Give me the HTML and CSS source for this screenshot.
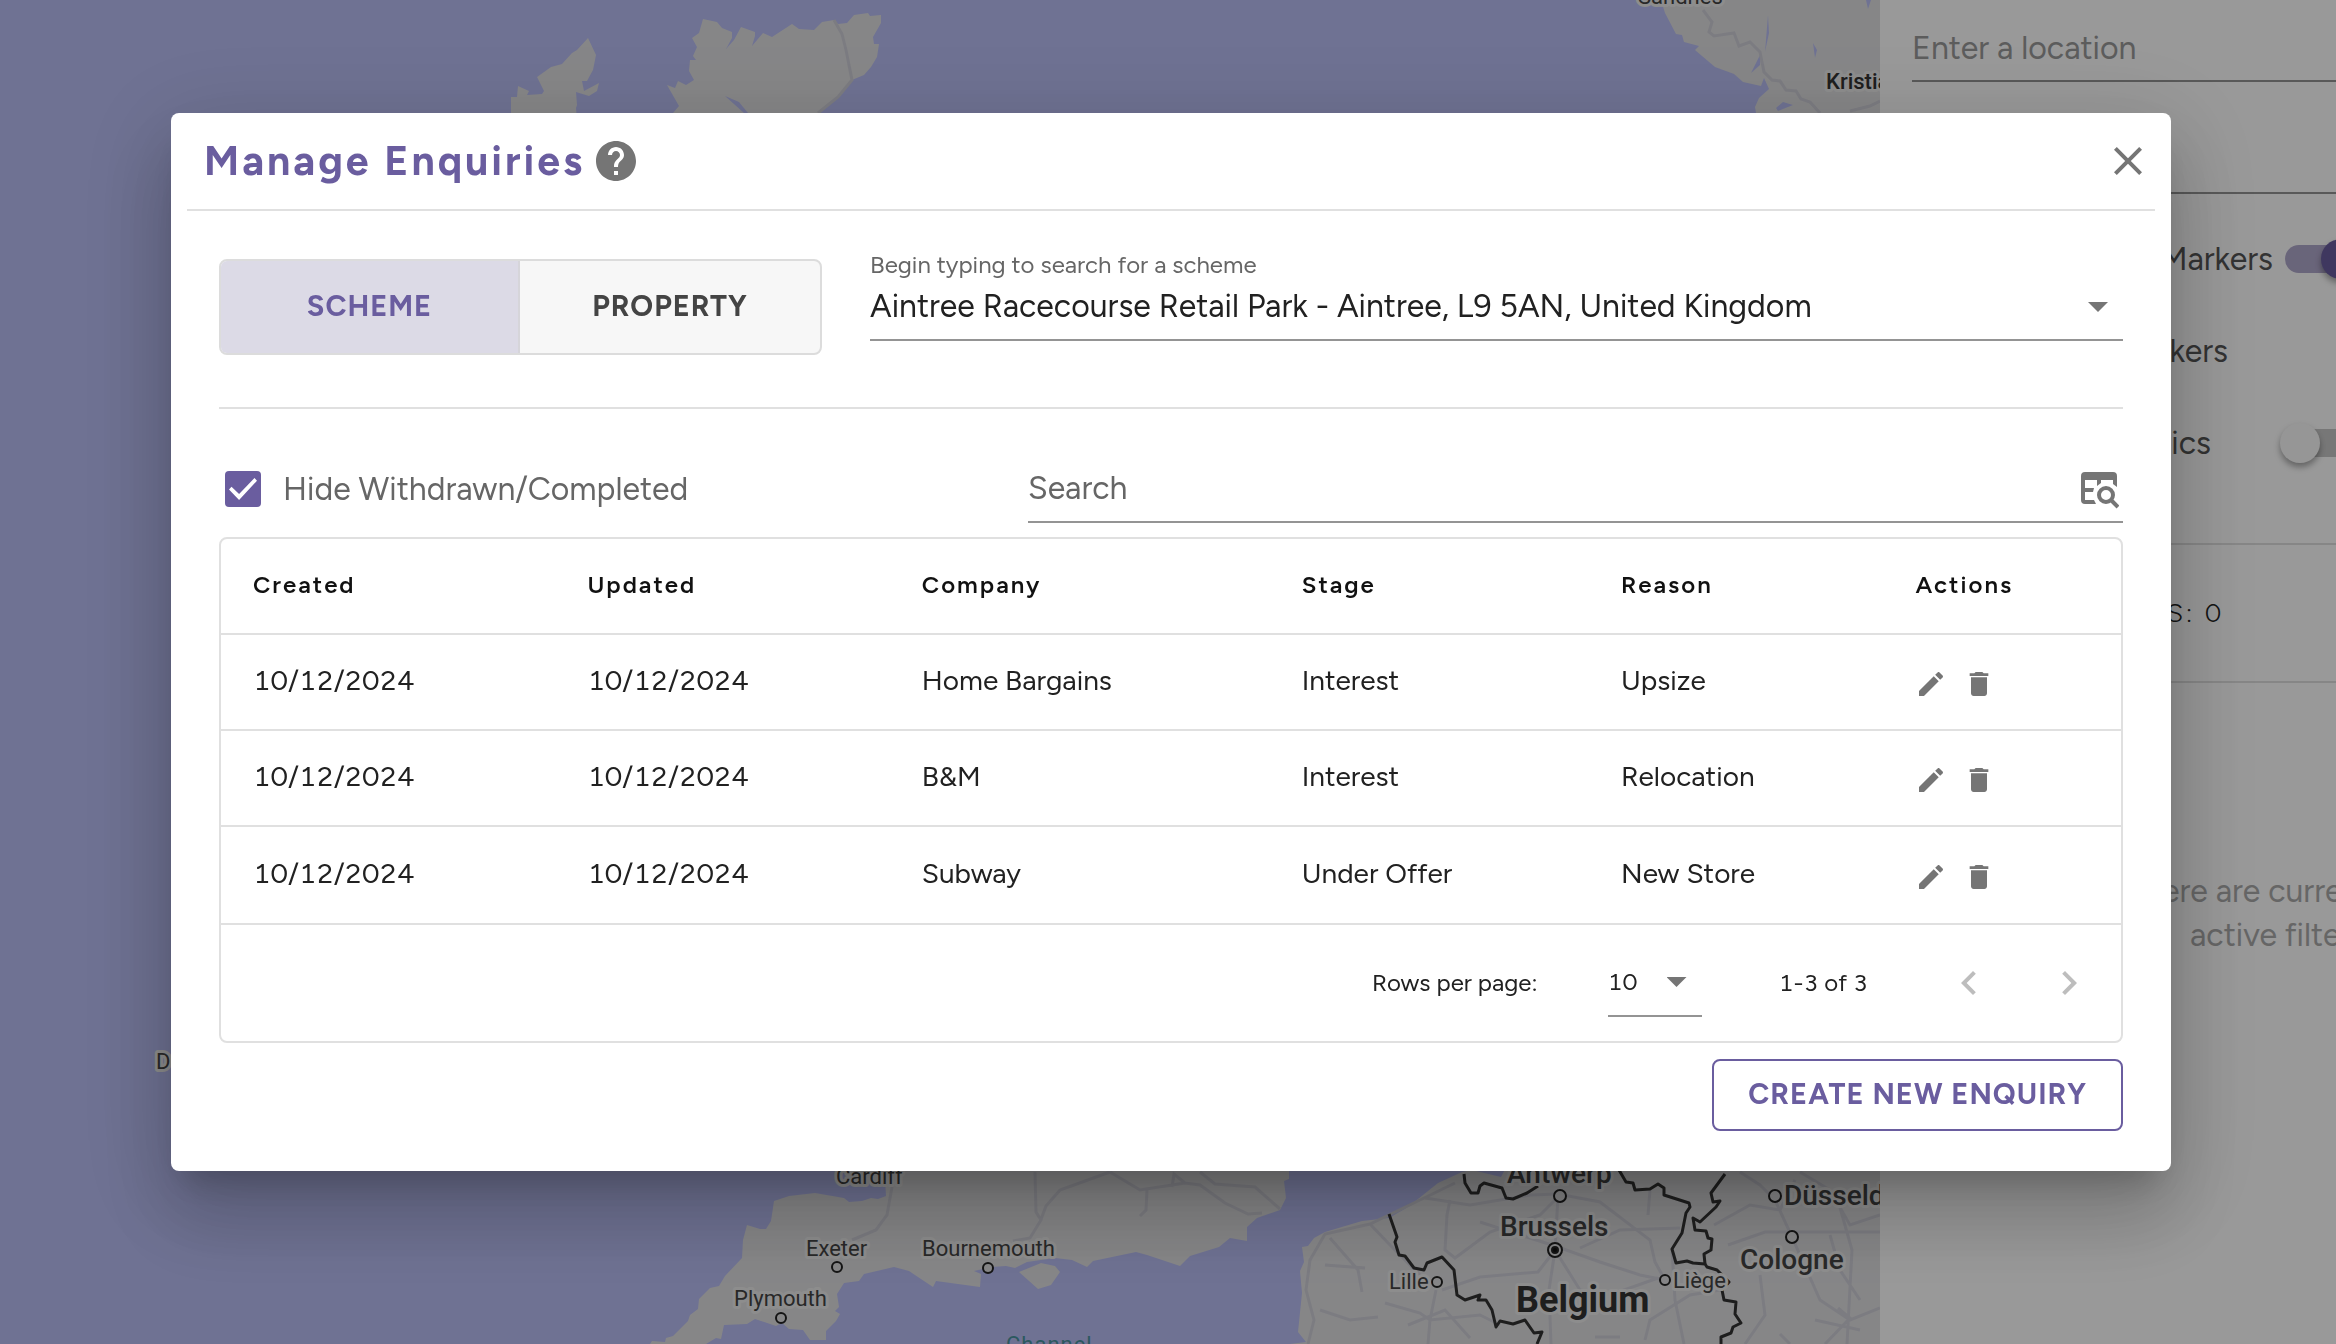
FILE: index.html
```html
<!DOCTYPE html>
<html lang="en">
<head>
<meta charset="utf-8">
<meta name="viewport" content="width=device-width, initial-scale=1">
<title>Manage Enquiries</title>
<link rel="stylesheet" href="styles.css">
</head>
<body>
<div class="app">
  <div class="map">
    <svg class="map-canvas" viewBox="0 0 1880 1344" preserveAspectRatio="xMinYMin slice" role="img" aria-label="Map">
      <g class="land">
        <path d="M588 38L596 55L593 70L587 81L582 81L584 91L599 83L597 91L589 96L576 92L577 105L576 108L578 130H511V97L517 97L518 86L529 91L527 95L542 94L544 91L537 77L551 67L562 64L572 53L577 50Z"/>
        <path d="M703 19L717 22L722 28L732 32L732 38L726 49L734 40L741 27L755 32L755 36L752 46L763 33L772 37L792 24L799 29L814 30L822 22L834 20L838 24L847 23L854 15L868 13L870 16L881 15L881 23L873 37L874 44L879 44L877 57L871 67L864 75L852 80L838 97L818 113L800 140H670L673 113L679 106L667 85L675 88L678 81L686 85L694 80L689 71L690 60L696 60L693 56L697 47L692 38L699 33Z"/>
        <path d="M1661 0L1665 13L1676 34L1682 35L1684 42L1699 46L1695 50L1715 67L1734 74L1743 82L1761 86L1764 78L1769 89L1759 98L1755 107L1759 130H1880V0Z"/>
        <path d="M884 1160L886 1196L878 1199L871 1198L862 1201L849 1202L844 1198L815 1193L789 1196L774 1201L771 1221L766 1229L760 1229L747 1225L743 1240L742 1258L725 1276L719 1286L710 1288L699 1299L698 1309L690 1315L688 1321L673 1336L666 1338L665 1342L652 1341L650 1344H706L716 1338L721 1339L724 1325L747 1324L755 1319L776 1326L782 1323L789 1329L803 1330L810 1340L826 1340L826 1331L836 1321L840 1314L835 1311L839 1307L837 1294L844 1283L859 1281L864 1274L894 1267L909 1271L933 1287L936 1281L980 1287L981 1274L974 1271L992 1267L1006 1266L1015 1268L1027 1262L1055 1258L1072 1260L1087 1267L1093 1261L1136 1252L1147 1255L1180 1266L1190 1256L1219 1247L1230 1238L1247 1241L1247 1227L1257 1218L1280 1210L1286 1198L1284 1181L1289 1179L1289 1160Z"/>
        <path d="M1041 1263L1055 1266L1060 1272L1051 1285L1038 1289L1019 1272Z"/>
        <path d="M1510 1160L1501 1177L1472 1170L1462 1172L1438 1183L1408 1207L1389 1218L1362 1221L1325 1232L1314 1238L1308 1246L1302 1247L1304 1262L1300 1271L1302 1293L1298 1332L1306 1342L1290 1344H1880V1160Z"/>
      </g>
      <g class="water">
        <path d="M725 96L739 102L748 113H744Z"/>
        <path d="M1768 15L1769 33L1765 52Z"/>
        <path d="M1751 73L1761 53L1760 65Z"/>
        <path d="M1813 43L1817 50L1815 58Z"/>
        <path d="M1866 0H1871L1868 9Z"/>
        <path d="M1776 108L1783 102L1793 105L1778 111Z"/>
      </g>
      <g class="roads">
        <path d="M834 20L842 34L846 50L852 80L838 97L818 113"/>
        <path d="M1703 10L1712 22L1709 32L1714 36L1734 33L1739 46L1750 42L1760 52L1764 72L1772 80L1780 81L1786 90L1796 91L1801 99L1810 102L1820 113M1850 111L1870 106L1880 101"/>
        <path d="M892 1187L887 1215L876 1230L852 1240M1035 1172L1036 1212L1041 1220L1030 1238L1013 1241M1110 1172L1060 1190L1046 1206L1040 1222M1110 1172L1140 1190L1185 1183L1200 1185L1225 1203L1248 1214L1262 1213M1147 1190L1146 1210L1140 1216M1172 1187L1174 1174L1185 1183M1200 1172L1215 1184L1255 1187L1280 1209"/>
        <path d="M1308 1344L1314 1320L1306 1290L1310 1260L1325 1234L1370 1224L1420 1200L1455 1183M1370 1224L1390 1245L1420 1275M1425 1198L1470 1205L1530 1195L1558 1194L1600 1202L1650 1240L1655 1262L1665 1280M1450 1200L1447 1215L1445 1250L1455 1258L1490 1232L1540 1215L1557 1198M1558 1196L1555 1250L1549 1290L1551 1344M1480 1222L1555 1246L1600 1262L1640 1275L1660 1279M1442 1290L1480 1277L1538 1272L1555 1250M1555 1250L1580 1290L1610 1295L1658 1278M1580 1248L1620 1230L1680 1228M1672 1249L1675 1300L1684 1344M1650 1190L1648 1215"/>
        <path d="M1330 1238L1358 1270L1362 1292M1325 1265L1365 1268M1320 1310L1350 1320L1378 1317M1385 1303L1420 1313L1430 1320L1480 1315L1500 1325M1436 1290L1430 1320L1428 1344M1408 1325L1445 1310L1470 1338M1595 1337H1620M1645 1340L1650 1320L1690 1295L1720 1290"/>
        <path d="M1740 1172L1760 1185L1775 1200L1792 1237L1820 1300L1850 1320L1880 1308M1714 1225L1750 1205L1780 1210L1795 1180M1800 1172L1830 1190L1850 1225L1880 1215M1728 1245L1765 1232L1880 1232M1760 1275L1765 1315L1745 1344M1830 1235L1840 1270L1860 1300M1815 1320L1860 1330M1825 1344L1850 1318L1838 1308M1847 1344L1852 1250L1835 1190M1780 1334L1790 1344"/>
      </g>
      <g class="borders">
        <path d="M1464 1174L1465 1183L1471 1193H1478L1480 1186L1484 1183L1502 1188L1506 1198L1513 1199L1527 1193L1538 1186"/>
        <path d="M1619 1170L1626 1182L1633 1183L1635 1190L1650 1189L1658 1184L1664 1188V1195L1689 1203L1690 1207L1686 1213L1682 1233L1672 1249L1676 1263L1687 1261L1693 1263L1705 1264L1707 1267L1717 1270L1729 1282L1722 1290L1724 1300L1736 1302L1735 1314L1741 1323L1733 1327L1731 1333L1721 1337V1344"/>
        <path d="M1725 1174L1711 1193L1713 1202L1720 1201L1716 1207L1700 1222L1693 1218L1695 1230L1706 1231L1708 1238L1712 1239L1711 1250L1704 1254L1705 1264"/>
        <path d="M1389 1214L1397 1237L1395 1242L1399 1255L1405 1256L1414 1268L1424 1270L1427 1263L1442 1257L1454 1270L1457 1295L1465 1300L1480 1295L1478 1300L1486 1300L1492 1310L1496 1327L1500 1321L1513 1324L1525 1320L1534 1333L1542 1332L1537 1344"/>
      </g>
      <g class="dots">
        <circle cx="837" cy="1267" r="5"/><circle cx="988" cy="1268" r="5"/><circle cx="781" cy="1318" r="5"/>
        <circle cx="1560" cy="1196" r="6"/><circle cx="1555" cy="1250" r="7"/><circle class="dot-core" cx="1555" cy="1250" r="3"/>
        <circle cx="1437" cy="1282" r="5"/><circle cx="1665" cy="1280" r="5"/><circle cx="1775" cy="1196" r="6"/><circle cx="1792" cy="1237" r="6"/>
      </g>
      <g class="town">
        <text x="836" y="1184">Cardiff</text><text x="806" y="1256">Exeter</text><text x="922" y="1256">Bournemouth</text>
        <text x="734" y="1306">Plymouth</text><text x="1389" y="1289">Lille</text><text x="1673" y="1288">Liège</text>
        <text x="156" y="1069">D</text><text x="1638" y="4">Sandnes</text>
        <text class="town-strong" x="1826" y="89">Kristia</text>
      </g>
      <g class="city">
        <text x="1507" y="1183">Antwerp</text><text x="1500" y="1236">Brussels</text>
        <text x="1784" y="1205">Düsseld</text><text x="1740" y="1269">Cologne</text>
      </g>
      <text class="country" x="1516" y="1312">Belgium</text>
      <text class="sea" x="1006" y="1352">Channel</text>
    </svg>
  </div>
  <aside class="side">
    <input class="side-field" type="text" placeholder="Enter a location" aria-label="Location">
    <div class="side-field side-blank"></div>
    <label class="switch-row"><span class="switch-name">Markers</span><input class="switch" type="checkbox" role="switch" checked></label>
    <div class="switch-row"><span class="switch-name name-second">Markers</span></div>
    <label class="switch-row"><span class="switch-name name-third">ics</span><input class="switch" type="checkbox" role="switch"></label>
    <p class="side-count">S: 0</p>
    <p class="side-empty"><span>ere are curren</span><span>active filters</span></p>
  </aside>
</div>

<div class="backdrop">
  <section class="dialog" role="dialog" aria-modal="true" aria-labelledby="dialog-title">
    <header class="dialog-head">
      <h1 class="dialog-title" id="dialog-title">Manage Enquiries</h1>
      <button class="icon-button" type="button" aria-label="Help">
        <svg class="icon-large" viewBox="0 0 24 24"><path d="M12 2C6.480 2 2 6.480 2 12s4.480 10 10 10 10-4.480 10-10S17.520 2 12 2zm1 17h-2v-2h2v2zm2.070-7.750-.9.920C13.450 12.900 13 13.500 13 15h-2v-.5c0-1.100.450-2.100 1.170-2.830l1.240-1.260c.370-.360.590-.860.590-1.410 0-1.100-.9-2-2-2s-2 .9-2 2H8c0-2.210 1.790-4 4-4s4 1.790 4 4c0 .880-.360 1.680-.930 2.250z"/></svg>
      </button>
      <button class="icon-button close" type="button" aria-label="Close">
        <svg class="icon-large" viewBox="0 0 24 24"><path d="M19 6.410 17.590 5 12 10.590 6.410 5 5 6.410 10.590 12 5 17.590 6.410 19 12 13.410 17.590 19 19 17.590 13.410 12z"/></svg>
      </button>
    </header>

    <div class="dialog-body">
      <div class="scope">
        <div class="toggle" role="group" aria-label="Search by">
          <button class="toggle-item selected" type="button" aria-pressed="true">SCHEME</button>
          <button class="toggle-item" type="button" aria-pressed="false">PROPERTY</button>
        </div>
        <div class="combo">
          <label class="combo-label" for="scheme">Begin typing to search for a scheme</label>
          <div class="combo-line">
            <input class="field-input" id="scheme" type="text" value="Aintree Racecourse Retail Park - Aintree, L9 5AN, United Kingdom">
            <span class="arrow" aria-hidden="true"></span>
          </div>
        </div>
      </div>

      <div class="filters">
        <label class="check"><input class="check-box" type="checkbox" checked><span>Hide Withdrawn/Completed</span></label>
        <div class="search">
          <input class="field-input" type="search" placeholder="Search" aria-label="Search">
          <svg class="icon-search" viewBox="0 0 38 38" aria-hidden="true">
            <path d="M4 0H32a4 4 0 0 1 4 4V15L32 12V8H20V11L16 14V8H4V16H13L12 20H4V28H13L15 32H4a4 4 0 0 1-4-4V4a4 4 0 0 1 4-4z"/>
            <circle cx="25" cy="23" r="7"/><path class="handle" d="M30 28L37 35"/>
          </svg>
        </div>
      </div>

      <div class="grid">
        <table class="enquiries">
          <colgroup><col class="c-date"><col class="c-date"><col class="c-company"><col class="c-stage"><col class="c-reason"><col></colgroup>
          <thead><tr><th>Created</th><th>Updated</th><th>Company</th><th>Stage</th><th>Reason</th><th>Actions</th></tr></thead>
          <tbody>
            <tr><td>10/12/2024</td><td>10/12/2024</td><td>Home Bargains</td><td>Interest</td><td>Upsize</td><td><div class="actions">
              <button class="icon-button" type="button" aria-label="Edit Home Bargains"><svg class="icon" viewBox="0 0 24 24"><path d="M3 17.250V21h3.750L17.810 9.940l-3.750-3.750L3 17.250zM20.710 7.040c.390-.390.390-1.020 0-1.410l-2.340-2.340c-.390-.390-1.020-.390-1.410 0l-1.830 1.830 3.750 3.750 1.830-1.830z"/></svg></button>
              <button class="icon-button" type="button" aria-label="Delete Home Bargains"><svg class="icon" viewBox="0 0 24 24"><path d="M6 19c0 1.100.9 2 2 2h8c1.100 0 2-.9 2-2V7H6v12zM19 4h-3.500l-1-1h-5l-1 1H5v2h14V4z"/></svg></button></div></td></tr>
            <tr><td>10/12/2024</td><td>10/12/2024</td><td>B&amp;M</td><td>Interest</td><td>Relocation</td><td><div class="actions">
              <button class="icon-button" type="button" aria-label="Edit B&amp;M"><svg class="icon" viewBox="0 0 24 24"><path d="M3 17.250V21h3.750L17.810 9.940l-3.750-3.750L3 17.250zM20.710 7.040c.390-.390.390-1.020 0-1.410l-2.340-2.340c-.390-.390-1.020-.390-1.410 0l-1.830 1.830 3.750 3.750 1.830-1.830z"/></svg></button>
              <button class="icon-button" type="button" aria-label="Delete B&amp;M"><svg class="icon" viewBox="0 0 24 24"><path d="M6 19c0 1.100.9 2 2 2h8c1.100 0 2-.9 2-2V7H6v12zM19 4h-3.500l-1-1h-5l-1 1H5v2h14V4z"/></svg></button></div></td></tr>
            <tr><td>10/12/2024</td><td>10/12/2024</td><td>Subway</td><td>Under Offer</td><td>New Store</td><td><div class="actions">
              <button class="icon-button" type="button" aria-label="Edit Subway"><svg class="icon" viewBox="0 0 24 24"><path d="M3 17.250V21h3.750L17.810 9.940l-3.750-3.750L3 17.250zM20.710 7.040c.390-.390.390-1.020 0-1.410l-2.340-2.340c-.390-.390-1.020-.390-1.410 0l-1.830 1.830 3.750 3.750 1.830-1.830z"/></svg></button>
              <button class="icon-button" type="button" aria-label="Delete Subway"><svg class="icon" viewBox="0 0 24 24"><path d="M6 19c0 1.100.9 2 2 2h8c1.100 0 2-.9 2-2V7H6v12zM19 4h-3.500l-1-1h-5l-1 1H5v2h14V4z"/></svg></button></div></td></tr>
          </tbody>
        </table>
        <div class="pager">
          <label for="rows">Rows per page:</label>
          <div class="rows"><select class="rows-select" id="rows"><option>10</option></select><span class="arrow" aria-hidden="true"></span></div>
          <span class="range">1-3 of 3</span>
          <div class="pages">
            <button class="icon-button" type="button" aria-label="Previous page" disabled><svg class="icon-page" viewBox="0 0 24 24"><path d="M15.410 7.410 14 6l-6 6 6 6 1.410-1.410L10.830 12z"/></svg></button>
            <button class="icon-button" type="button" aria-label="Next page" disabled><svg class="icon-page" viewBox="0 0 24 24"><path d="M10 6 8.590 7.410 13.170 12l-4.580 4.590L10 18l6-6z"/></svg></button>
          </div>
        </div>
      </div>
      <button class="create" type="button">CREATE NEW ENQUIRY</button>
    </div>
  </section>
</div>
</body>
</html>
```
FILE: styles.css
```css
:root {
  --purple: #6a5d9f;
  --line: #e0e0e0;
  --field-line: #949494;
  --icon: #757575;
  --muted: #666;
  --ink: #212121;
}

* { box-sizing: border-box; }

body {
  margin: 0;
  height: 100vh;
  overflow: hidden;
  color: var(--ink);
  font-family: Figtree, Lato, "Liberation Sans", sans-serif;
  font-size: 28px;
  line-height: 36px;
}

button, input, select { font: inherit; color: inherit; margin: 0; padding: 0; border: 0; background: none; border-radius: 0; }
input, select { outline: 0; min-width: 0; }
h1, p { margin: 0; }

/* Page behind the dialog */
.app { display: flex; height: 100vh; }
.map { flex: 1; min-width: 0; background: #b9bef5; overflow: hidden; }
.map-canvas { display: block; width: 100%; height: 100%; }
.land { fill: #e0e0e2; }
.water { fill: #b9bef5; }
.roads { fill: none; stroke: #cfcfd8; stroke-width: 3; }
.borders { fill: none; stroke: #333; stroke-width: 3; stroke-linejoin: round; }
.dots { fill: #e0e0e2; stroke: #222; stroke-width: 2; }
.dot-core { fill: #111; }
.map-canvas text { font-family: Roboto, sans-serif; paint-order: stroke; stroke: #ececec; stroke-width: 6px; stroke-linejoin: round; fill: #444; }
.town text { font-size: 22px; }
.map-canvas .town-strong { font-weight: 500; fill: #333; }
.city text { font-size: 28px; font-weight: 500; }
.map-canvas .country { font-size: 36px; font-weight: 700; fill: #333; }
.map-canvas .sea { font-size: 22px; fill: #4a949f; stroke: none; letter-spacing: 1px; }

.side { flex: none; width: 456px; padding-left: 32px; background: #fff; font-size: 32px; line-height: 44px; overflow: hidden; color: #555; }
.side-field { display: block; width: 100%; height: 82px; padding-top: 16px; border-bottom: 2px solid #949494; }
.side-field::placeholder { color: #9a9a9a; opacity: 1; }
.side-blank { height: 112px; margin-bottom: 19px; }
.switch-row { display: flex; align-items: center; height: 92px; }
.switch-name { flex: none; width: 361px; text-align: right; }
.name-second { width: 316px; }
.name-third { width: 299px; }
.switch { appearance: none; position: relative; flex: none; width: 68px; height: 28px; margin-left: 12px; border-radius: 14px; background: #c7c7c7; }
.name-third + .switch { margin-left: 73px; }
.switch::before { content: ""; position: absolute; left: -4px; top: -6px; width: 40px; height: 40px; border-radius: 50%; background: #fafafa; box-shadow: 0 4px 6px rgba(0, 0, 0, .35); }
.switch:checked { background: #b0a8cc; }
.switch:checked::before { left: 36px; background: var(--purple); }
.side-count { height: 140px; margin: 54px 0 0 -32px; padding: 46px 0 0 287px; border: solid #e0e0e0; border-width: 2px 0; color: #222; font-size: 26px; font-weight: 300; letter-spacing: 3px; }
.side-empty { display: grid; margin-top: 186px; padding-left: 250px; color: #aaa; white-space: nowrap; }
.side-empty span + span { padding-left: 28px; }

/* Dialog */
.backdrop { position: fixed; inset: 0; padding: 113px 165px 0 171px; background: rgba(0, 0, 0, .4); }
.dialog {
  padding: 0 16px 40px;
  background: #fff;
  border-radius: 8px;
  box-shadow: 0 22px 30px -14px rgba(0, 0, 0, .2), 0 48px 76px 6px rgba(0, 0, 0, .14), 0 18px 92px 16px rgba(0, 0, 0, .12);
}
.dialog-head { display: flex; align-items: center; gap: 7px; height: 98px; padding: 0 3px 0 17px; border-bottom: 2px solid var(--line); }
.dialog-title { color: var(--purple); font-size: 41px; line-height: 48px; font-weight: 700; letter-spacing: 3px; }
.icon-button { display: flex; color: var(--icon); fill: currentColor; cursor: pointer; }
.icon-button:disabled { color: #bdbdbd; cursor: default; }
.close { margin-left: auto; }
.icon-large { width: 48px; height: 48px; }
.icon { width: 32px; height: 32px; }
.icon-page { width: 48px; height: 48px; }

.dialog-body { display: flex; flex-direction: column; padding: 48px 32px 0; }
.scope { display: flex; gap: 48px; height: 150px; border-bottom: 2px solid var(--line); }
.toggle { display: flex; width: 603px; height: 96px; border: 2px solid #dcdcdc; border-radius: 8px; background: #f7f7f7; overflow: hidden; }
.toggle-item { flex: 1; padding-bottom: 2px; color: #444; font-size: 29px; font-weight: 700; letter-spacing: 1px; }
.toggle-item.selected { flex: none; width: 299px; color: var(--purple); background: #dcdae6; border-right: 2px solid #d6d5da; }
.combo { flex: 1; display: flex; flex-direction: column; height: 82px; color: var(--muted); font-size: 24px; line-height: 12px; }
.combo-line { flex: 1; display: flex; align-items: center; padding-top: 2px; border-bottom: 2px solid var(--field-line); }
.field-input { flex: 1; height: 48px; color: var(--ink); font-size: 32px; line-height: 48px; }
.field-input::placeholder { color: var(--muted); opacity: 1; }
.arrow { flex: none; width: 20px; height: 10px; background: var(--icon); clip-path: polygon(0 0, 100% 0, 50% 100%); pointer-events: none; }
.combo .arrow { margin: 2px 15px 0 0; }

.filters { display: flex; justify-content: space-between; height: 128px; padding-bottom: 14px; }
.check { display: flex; align-items: center; align-self: flex-end; gap: 22px; height: 68px; margin-left: 6px; color: var(--muted); font-size: 32px; }
.check-box { appearance: none; width: 36px; height: 36px; border-radius: 4px; background: var(--purple); }
.check-box::before { content: ""; display: block; width: 28px; height: 22px; margin: 7px 4px; background: #fff; clip-path: polygon(0 52%, 9% 40%, 36% 73%, 91% 0, 100% 12%, 36% 100%); }
.search { display: flex; align-items: center; align-self: flex-end; width: 1095px; height: 70px; padding-top: 2px; border-bottom: 2px solid var(--field-line); }
.icon-search { width: 38px; height: 38px; margin: 6px 4px 0 0; fill: var(--icon); }
.icon-search circle, .icon-search .handle { fill: none; stroke: var(--icon); stroke-width: 4; }

.grid { border: 2px solid var(--line); border-radius: 8px; }
.enquiries { width: 100%; border-collapse: separate; border-spacing: 0; table-layout: fixed; font-variant-numeric: tabular-nums; }
.c-date { width: 17.6%; }
.c-company { width: 20%; }
.c-stage { width: 16.8%; }
.c-reason { width: 15.5%; }
.enquiries th, .enquiries td { height: 96px; padding: 0 32px 2px; border-bottom: 2px solid var(--line); text-align: left; }
.enquiries td { padding-bottom: 4px; }
.enquiries tr:last-child td { height: 98px; }
.enquiries thead tr th { height: 96px; color: #111; font-size: 24px; font-weight: 600; letter-spacing: 2px; }
.actions { display: flex; gap: 16px; padding-top: 7px; }

.pager { display: flex; align-items: center; justify-content: flex-end; height: 116px; padding-right: 28px; font-size: 24px; font-variant-numeric: tabular-nums; }
.rows { display: flex; align-items: center; justify-content: space-between; width: 94px; height: 68px; margin: 0 77px 0 70px; padding: 0 15px 0 0; border-bottom: 2px solid var(--field-line); }
.rows-select { appearance: none; width: 56px; height: 66px; }
.pages { display: flex; gap: 52px; margin-left: 77px; }

.create { align-self: flex-end; height: 72px; margin-top: 16px; padding: 0 34px 2px; border: 2px solid var(--purple); border-radius: 8px; color: var(--purple); font-size: 29px; font-weight: 700; letter-spacing: 1px; }
```
